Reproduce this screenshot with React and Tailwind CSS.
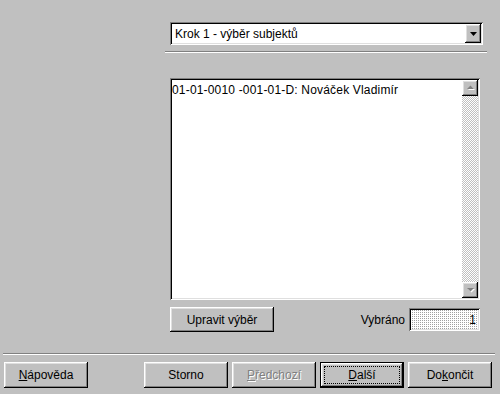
const raised =
  "shadow-[inset_-1px_-1px_#000,inset_1px_1px_#fff,inset_-2px_-2px_#808080,inset_2px_2px_#dfdfdf]";
const sunken =
  "shadow-[inset_1px_1px_#808080,inset_-1px_-1px_#fff,inset_2px_2px_#000,inset_-2px_-2px_#dfdfdf]";

function Button({ children, className = "", isDefault = false, disabled = false }) {
  return (
    <div
      className={`relative flex items-center justify-center bg-[#c0c0c0] ${
        isDefault ? "border border-black" : ""
      } ${className}`}
    >
      <div className={`absolute inset-0 ${raised}`} />
      {isDefault && (
        <div className="absolute inset-[3px] border border-dotted border-black" />
      )}
      <span
        className={`relative ${
          disabled ? "text-[#808080] [text-shadow:1px_1px_#fff]" : "text-black"
        }`}
      >
        {children}
      </span>
    </div>
  );
}

function ScrollArrow({ up }) {
  return (
    <div className={`relative flex h-[16px] w-[16px] items-center justify-center bg-[#c0c0c0] ${raised}`}>
      <svg width="9" height="6" viewBox="0 0 9 6">
        {up ? (
          <>
            <path d="M2 5h7L5.5 1.5z" fill="#fff" />
            <path d="M1 4h7L4.5 0.5z" fill="#808080" />
          </>
        ) : (
          <>
            <path d="M2 2h7L5.5 5.5z" fill="#fff" />
            <path d="M1 1h7L4.5 4.5z" fill="#808080" />
          </>
        )}
      </svg>
    </div>
  );
}

export default function App() {
  return (
    <div className="flex h-[394px] w-[500px] flex-col overflow-hidden bg-[#c0c0c0] font-['Liberation_Sans',Arial,sans-serif] text-[12px] text-black">
      {/* step selector */}
      <div className={`ml-[170px] mt-[22px] flex h-[23px] w-[313px] items-center bg-white p-[2px] ${sunken}`}>
        <span className="flex-1 pl-[3px] leading-none">Krok 1 - výběr subjektů</span>
        <div className={`flex h-[19px] w-[16px] items-center justify-center bg-[#c0c0c0] ${raised}`}>
          <svg width="7" height="4" viewBox="0 0 7 4">
            <path d="M0 0h7L3.5 4z" fill="#000" />
          </svg>
        </div>
      </div>

      <div className="ml-[165px] mt-[6px] w-[322px] border-t border-b border-t-[#808080] border-b-white" />

      {/* subject list */}
      <div className={`ml-[170px] mt-[25px] flex h-[222px] w-[310px] bg-white p-[2px] ${sunken}`}>
        <div className="flex-1 pt-[3px] leading-[14px] tracking-[0.18px]">01-01-0010 -001-01-D: Nováček Vladimír</div>
        <div className="flex w-[16px] flex-col">
          <ScrollArrow up />
          <div className="flex-1 bg-[repeating-conic-gradient(#c0c0c0_0_25%,#fff_0_50%)] bg-[length:2px_2px]" />
          <ScrollArrow />
        </div>
      </div>

      <div className="ml-[170px] mt-[7px] flex w-[310px] items-center">
        <Button className="h-[25px] w-[104px]">Upravit výběr</Button>
        <span className="ml-auto mr-[4px]">Vybráno</span>
        <div className={`flex h-[23px] w-[71px] items-center justify-end bg-[repeating-conic-gradient(#a0a0a0_0_25%,#fff_0_100%)] bg-[length:2px_2px] pr-[4px] ${sunken}`}>
          1
        </div>
      </div>

      <div className="ml-[3px] mt-[21px] w-[492px] border-t border-b border-t-[#808080] border-b-white" />

      {/* wizard buttons */}
      <div className="mt-[7px] flex h-[26px] items-stretch pl-[4px]">
        <Button className="w-[84px]">
          <span className="underline">N</span>ápověda
        </Button>
        <div className="ml-[56px] flex gap-[4px]">
          <Button className="w-[84px]">Storno</Button>
          <Button className="w-[84px]" disabled>
            <span className="underline">P</span>ředchozí
          </Button>
          <Button className="w-[84px]" isDefault>
            <span className="underline">D</span>alší
          </Button>
          <Button className="w-[84px]">
            Do<span className="underline">k</span>ončit
          </Button>
        </div>
      </div>
    </div>
  );
}
